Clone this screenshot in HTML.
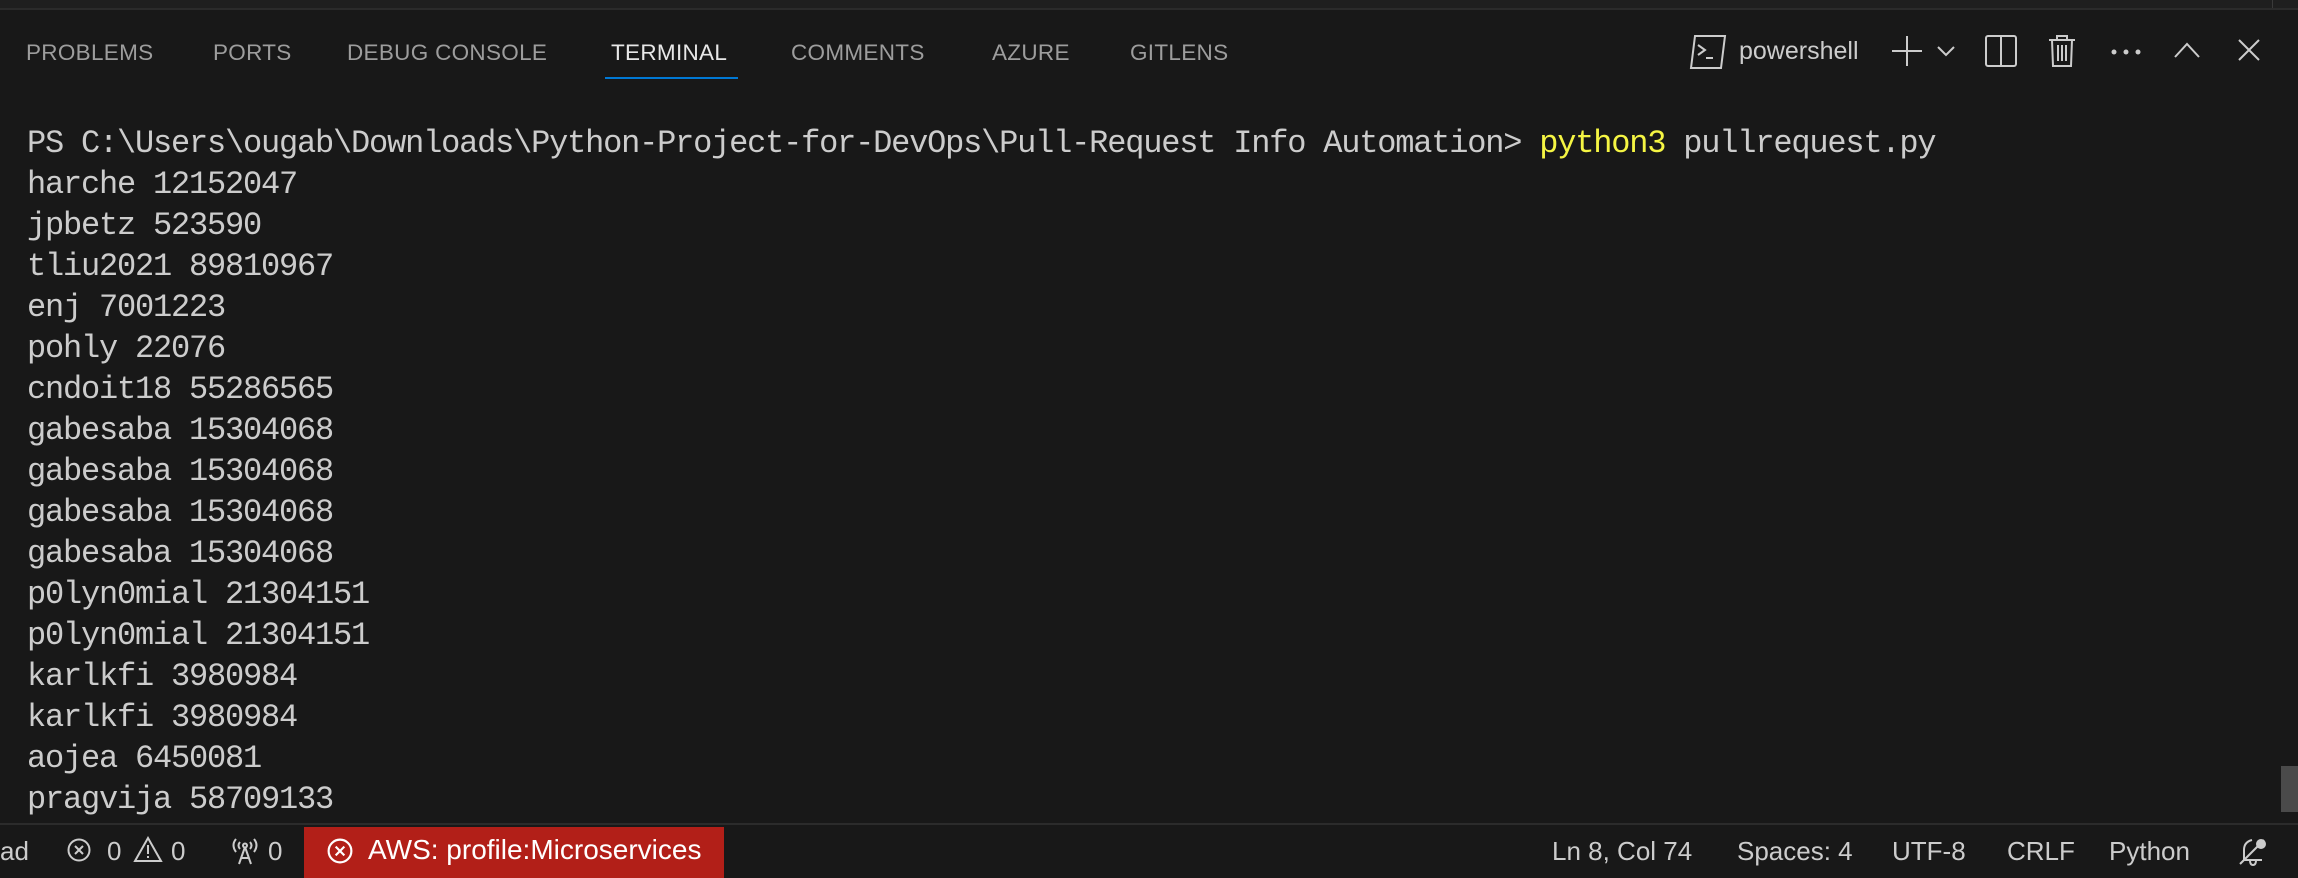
<!DOCTYPE html>
<html><head><meta charset="utf-8"><style>
html,body{margin:0;padding:0;width:2298px;height:878px;overflow:hidden;background:#181818;}
body{position:relative;font-family:"Liberation Sans",sans-serif;}
.topband{position:absolute;left:0;top:0;width:2298px;height:8px;background:#1f1f1f;}
.topline{position:absolute;left:0;top:8px;width:2298px;height:2px;background:#2b2b2b;}
.tab{position:absolute;top:38px;font-size:22.5px;color:#9d9d9d;line-height:30px;letter-spacing:0.3px;}
.tab.active{color:#e7e7e7;}
.ul{position:absolute;left:605px;top:77px;width:133px;height:2px;background:#0078d4;}
.term{position:absolute;left:27px;top:123px;font-family:"Liberation Mono",monospace;font-size:32px;letter-spacing:-1.2px;line-height:41px;color:#cccccc;white-space:pre;}
.y{color:#f5f543;}
.sb{position:absolute;left:0;top:823px;width:2298px;height:2px;background:#2b2b2b;}
.status{position:absolute;left:0;top:825px;width:2298px;height:53px;background:#181818;}
.st{position:absolute;top:836px;font-size:26px;line-height:30px;color:#cccccc;white-space:nowrap;}
.red{position:absolute;left:304px;top:827px;width:420px;height:51px;background:#b21f18;}
.scroll{position:absolute;left:2281px;top:766px;width:17px;height:46px;background:#4a4a4a;}
svg{position:absolute;}
</style></head><body>
<div class="topband"></div><div class="topline"></div>
<div style="position:absolute;left:2272px;top:0;width:1px;height:8px;background:#3a3a3a"></div>

<div class="tab" style="left:26px">PROBLEMS</div>
<div class="tab" style="left:213px">PORTS</div>
<div class="tab" style="left:347px">DEBUG CONSOLE</div>
<div class="tab active" style="left:611px">TERMINAL</div>
<div class="tab" style="left:791px">COMMENTS</div>
<div class="tab" style="left:992px">AZURE</div>
<div class="tab" style="left:1130px">GITLENS</div>
<div class="ul"></div>

<svg style="left:1688px;top:34px" width="40" height="36" viewBox="0 0 40 36" fill="none" stroke="#cccccc" stroke-width="2">
<path d="M7 2H37L33 34H3Z"/><path d="M10 11L17 16L10 21"/><path d="M18 24H25"/></svg>
<div style="position:absolute;left:1739px;top:36px;font-size:25px;color:#cccccc;line-height:30px">powershell</div>
<svg style="left:1891px;top:35px" width="32" height="32" viewBox="0 0 32 32" stroke="#cccccc" stroke-width="2"><path d="M16 1V31M1 16H31"/></svg>
<svg style="left:1937px;top:45px" width="18" height="12" viewBox="0 0 18 12" fill="none" stroke="#cccccc" stroke-width="2"><path d="M1 2L9 10L17 2"/></svg>
<svg style="left:1985px;top:35px" width="32" height="32" viewBox="0 0 32 32" fill="none" stroke="#cccccc" stroke-width="2"><rect x="1" y="1" width="30" height="30" rx="2"/><path d="M16 1V31"/></svg>
<svg style="left:2048px;top:34px" width="28" height="34" viewBox="0 0 28 34" fill="none" stroke="#cccccc" stroke-width="2"><path d="M1 6H27M9 6V2H19V6M4 6L5 32H23L24 6M10 11V27M14 11V27M18 11V27"/></svg>
<svg style="left:2110px;top:48px" width="32" height="8" viewBox="0 0 32 8" fill="#cccccc"><circle cx="4" cy="4" r="2.5"/><circle cx="16" cy="4" r="2.5"/><circle cx="28" cy="4" r="2.5"/></svg>
<svg style="left:2174px;top:42px" width="26" height="16" viewBox="0 0 26 16" fill="none" stroke="#cccccc" stroke-width="2"><path d="M1 15L13 2L25 15"/></svg>
<svg style="left:2238px;top:39px" width="22" height="22" viewBox="0 0 22 22" fill="none" stroke="#cccccc" stroke-width="2"><path d="M1 1L21 21M21 1L1 21"/></svg>

<div class="term">PS C:\Users\ougab\Downloads\Python-Project-for-DevOps\Pull-Request Info Automation&gt; <span class="y">python3</span> pullrequest.py
harche 12152047
jpbetz 523590
tliu2021 89810967
enj 7001223
pohly 22076
cndoit18 55286565
gabesaba 15304068
gabesaba 15304068
gabesaba 15304068
gabesaba 15304068
p0lyn0mial 21304151
p0lyn0mial 21304151
karlkfi 3980984
karlkfi 3980984
aojea 6450081
pragvija 58709133</div>
<div class="scroll"></div>

<div class="sb"></div>
<div class="status"></div>
<div class="red"></div>
<div class="st" style="left:0">ad</div>
<svg style="left:67px;top:838px" width="24" height="24" viewBox="0 0 24 24" fill="none" stroke="#cccccc" stroke-width="2"><circle cx="12" cy="12" r="10.5"/><path d="M8 8L16 16M16 8L8 16"/></svg>
<div class="st" style="left:107px">0</div>
<svg style="left:133px;top:836px" width="30" height="27" viewBox="0 0 30 27" fill="none" stroke="#cccccc" stroke-width="2"><path d="M15 2L28 25H2Z"/><path d="M15 9V18M15 20V22"/></svg>
<div class="st" style="left:171px">0</div>
<svg style="left:230px;top:835px" width="30" height="30" viewBox="0 0 30 30" fill="none" stroke="#cccccc" stroke-width="2"><path d="M6 4Q1 10 6 17M24 4Q29 10 24 17M10 7Q7 10.5 10 14M20 7Q23 10.5 20 14"/><circle cx="15" cy="10.5" r="2"/><path d="M15 12L9 29M15 12L21 29M11 23H19"/></svg>
<div class="st" style="left:268px">0</div>
<svg style="left:327px;top:838px" width="26" height="26" viewBox="0 0 24 24" fill="none" stroke="#ffffff" stroke-width="2"><circle cx="12" cy="12" r="10.5"/><path d="M8 8L16 16M16 8L8 16"/></svg>
<div class="st" style="left:368px;color:#ffffff;font-size:28px;top:835px">AWS: profile:Microservices</div>

<div class="st" style="left:1552px">Ln 8, Col 74</div>
<div class="st" style="left:1737px">Spaces: 4</div>
<div class="st" style="left:1892px">UTF-8</div>
<div class="st" style="left:2007px">CRLF</div>
<div class="st" style="left:2109px">Python</div>
<svg style="left:2236px;top:834px" width="34" height="34" viewBox="0 0 34 34" fill="none" stroke="#cccccc" stroke-width="2"><path d="M4 30L28 6"/><path d="M8 26V16Q8 8 16 6"/><path d="M8 26H26"/><path d="M14 26Q14 31 17 31Q20 31 20 26"/><circle cx="25" cy="10" r="4" fill="#cccccc"/></svg>
</body></html>
